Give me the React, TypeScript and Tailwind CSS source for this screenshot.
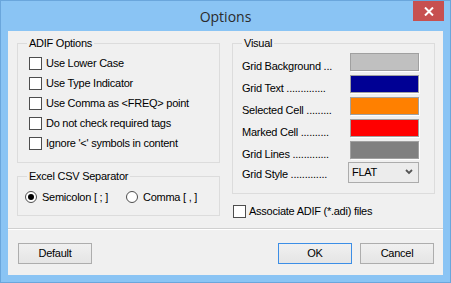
const font = { fontFamily: '"Liberation Sans", Arial, sans-serif' };

const Check = ({ label }: { label: string }) => (
  <div className="flex items-center h-[20px] gap-[4px]">
    <span className="w-[13px] h-[13px] border border-[#4d4d4d] bg-white shrink-0" />
    <span className="whitespace-nowrap">{label}</span>
  </div>
);

const Radio = ({ label, checked }: { label: string; checked?: boolean }) => (
  <div className="flex items-center gap-[5px]">
    <span className="w-[12px] h-[12px] rounded-full border border-[#4d4d4d] bg-white flex items-center justify-center shrink-0">
      {checked && <span className="w-[6px] h-[6px] rounded-full bg-black" />}
    </span>
    <span className="whitespace-nowrap">{label}</span>
  </div>
);

const colors = [
  { label: "Grid Background ...", color: "bg-[#c0c0c0]" },
  { label: "Grid Text ..............", color: "bg-[#000094]" },
  { label: "Selected Cell .........", color: "bg-[#ff8000]" },
  { label: "Marked Cell ..........", color: "bg-[#ff0000]" },
  { label: "Grid Lines .............", color: "bg-[#808080]" },
];

const Btn = ({ label, focus }: { label: string; focus?: boolean }) => (
  <button
    className={
      "w-[74px] h-[21px] border bg-gradient-to-b from-[#f0f0f0] to-[#e5e5e5] flex items-center justify-center " +
      (focus ? "border-[#3c8ee6]" : "border-[#adadad]")
    }
  >
    {label}
  </button>
);

export default function App() {
  return (
    <div
      className="w-[451px] h-[283px] bg-[#8ac4f4] border border-[#6aa6dc] flex flex-col text-[11px] tracking-[-0.25px] text-black"
      style={font}
    >
      <div className="relative h-[30px] flex items-center justify-center">
        <span className="text-[14px] tracking-normal text-[#2b2b2b]" style={{ fontFamily: '"Open Sans", sans-serif' }}>
          Options
        </span>
        <div className="absolute top-0 right-[6px] w-[31px] h-[20px] bg-[#c75050] flex items-center justify-center">
          <svg width="10" height="9" viewBox="0 0 10 9">
            <path d="M1 0.5 L9 8.5 M9 0.5 L1 8.5" stroke="white" strokeWidth="2" />
          </svg>
        </div>
      </div>

      <div className="mx-[7px] h-[244px] bg-[#f0f0f0] flex flex-col">
        <div className="flex gap-[12px] pl-[9px] pr-[8px] pt-[5px] h-[197px]">
          <div className="w-[203px] flex flex-col gap-[6px]">
            <fieldset className="h-[127px] border border-[#dcdcdc]">
              <legend className="ml-[9px] px-[2px] leading-[14px]">ADIF Options</legend>
              <div className="pl-[11px] pt-[3px] flex flex-col">
                <Check label="Use Lower Case" />
                <Check label="Use Type Indicator" />
                <Check label="Use Comma as <FREQ> point" />
                <Check label="Do not check required tags" />
                <Check label="Ignore '<' symbols in content" />
              </div>
            </fieldset>
            <fieldset className="h-[47px] border border-[#dcdcdc]">
              <legend className="ml-[9px] px-[2px] leading-[14px]">Excel CSV Separator</legend>
              <div className="pl-[7px] pt-[6px] flex items-center h-[22px] gap-[18px]">
                <Radio label="Semicolon [ ; ]" checked />
                <Radio label="Comma [ , ]" />
              </div>
            </fieldset>
          </div>

          <div className="w-[203px] flex flex-col">
            <fieldset className="h-[158px] border border-[#dcdcdc]">
              <legend className="ml-[9px] px-[2px] leading-[14px]">Visual</legend>
              <div className="pt-[1px] pl-[9px] pr-[15px] flex flex-col">
                {colors.map((c) => (
                  <div key={c.label} className="flex items-center justify-between h-[22px]">
                    <span className="whitespace-nowrap mt-[8px]">{c.label}</span>
                    <span className={"w-[69px] h-[18px] border border-[#a0a0a0] shadow-[1px_1px_0_#ffffff] " + c.color} />
                  </div>
                ))}
                <div className="flex items-center justify-between h-[22px]">
                  <span className="whitespace-nowrap mt-[4px]">Grid Style .............</span>
                  <div className="w-[71px] h-[21px] border border-[#acacac] bg-[#ececec] flex items-center justify-between pl-[3px] pr-[5px]">
                    <span>FLAT</span>
                    <svg width="8" height="6" viewBox="0 0 8 6">
                      <path d="M1 1 L4 4 L7 1" stroke="#555" strokeWidth="1.8" fill="none" />
                    </svg>
                  </div>
                </div>
              </div>
            </fieldset>
            <div className="mt-[11px] pl-[1px]">
              <div className="flex items-center h-[13px] gap-[3px]">
                <span className="w-[13px] h-[13px] border border-[#4d4d4d] bg-white shrink-0" />
                <span className="whitespace-nowrap">Associate ADIF (*.adi) files</span>
              </div>
            </div>
          </div>
        </div>

        <div className="border-t border-[#d0d0d0] border-b border-b-white" />

        <div className="flex items-start pt-[13px] pl-[10px] pr-[9px]">
          <Btn label="Default" />
          <div className="flex-1" />
          <Btn label="OK" focus />
          <div className="w-[8px]" />
          <Btn label="Cancel" />
        </div>
      </div>
    </div>
  );
}
